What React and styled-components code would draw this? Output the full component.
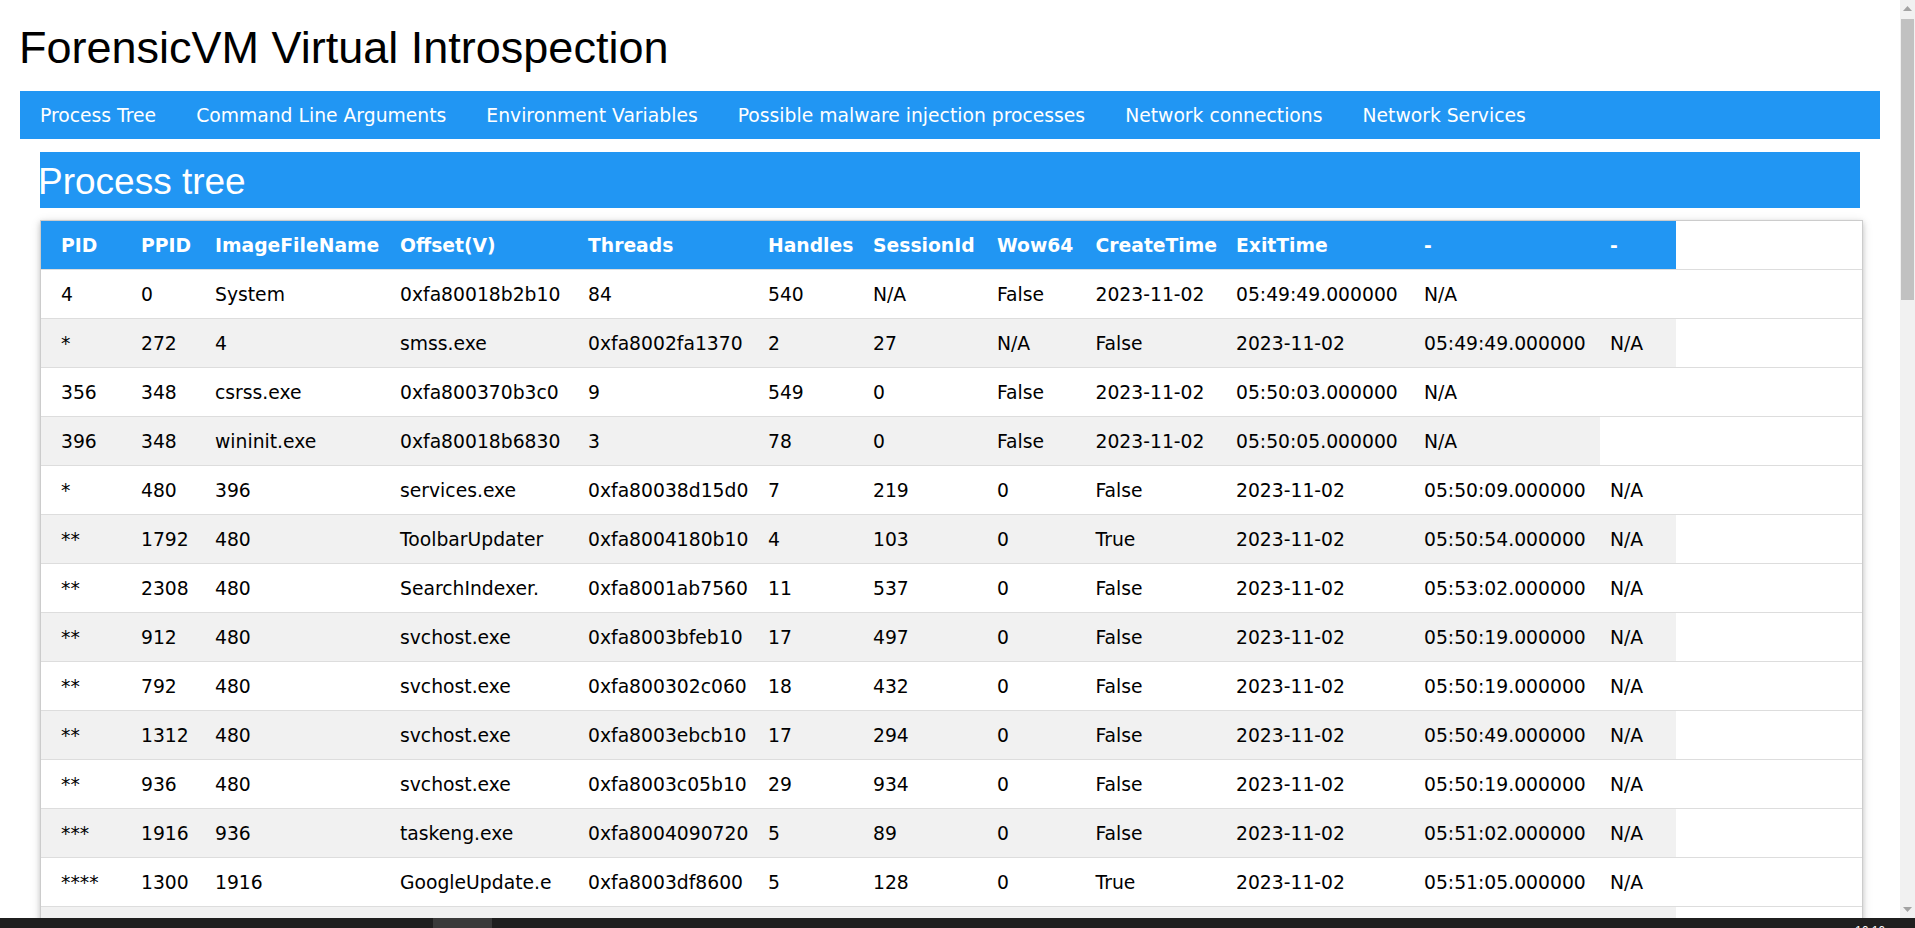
import React from "react";
import styled, { createGlobalStyle } from "styled-components";

const GlobalStyle = createGlobalStyle`
  html, body {
    margin: 0;
    padding: 0;
    overflow: hidden;
    background: #fff;
  }
  body {
    font-family: "DejaVu Sans", Verdana, sans-serif;
    font-size: 18.75px;
    line-height: 1.5;
    color: #000;
  }
`;

const Screen = styled.div`
  display: flex;
  flex-direction: column;
  width: 1915px;
  height: 928px;
`;

const Viewport = styled.div`
  display: flex;
  height: 918px;
  min-height: 0;
`;

const Page = styled.main`
  flex: 1;
  min-width: 0;
  overflow: hidden;
`;

const Title = styled.h1`
  margin: 21px 0 16px;
  padding: 0 19px;
  font-family: "Liberation Sans", Arial, sans-serif;
  font-size: 45px;
  font-weight: 400;
  line-height: 54px;
  color: #000;
`;

const NavBar = styled.nav`
  display: flex;
  margin: 0 20px;
  background: #2196f3;
`;

const NavItem = styled.a`
  padding: 11px 20px 9px;
  color: #fff;
  text-decoration: none;
  white-space: nowrap;
  line-height: 28px;
`;

const Section = styled.section`
  padding: 13px 40px 0;
`;

const Heading = styled.h2`
  margin: 0;
  padding: 3px 0 0;
  background: #2196f3;
  color: #fff;
  font-family: "Liberation Sans", Arial, sans-serif;
  font-size: 37px;
  font-weight: 400;
  line-height: 53px;
  text-indent: -2px;
`;

const TableCard = styled.div`
  margin: 12px -3px 0 0;
  border: 1px solid #ccc;
  box-shadow: 0 2px 5px 0 rgba(0, 0, 0, 0.16), 0 2px 10px 0 rgba(0, 0, 0, 0.12);
  background: #fff;
`;

const Table = styled.table`
  width: 100%;
  border-collapse: collapse;
  border-spacing: 0;
  table-layout: fixed;
`;

const Col = styled.col`
  width: ${(p) => (p.$w ? `${p.$w}px` : "auto")};
`;

const Row = styled.tr`
  border-bottom: 1px solid #ddd;
  background: ${(p) =>
    p.$head ? "#2196f3" : p.$even ? "#f1f1f1" : "#fff"};
`;

const cellBase = `
  height: 28px;
  padding: 11px 10px 9px;
  text-align: left;
  vertical-align: top;
  white-space: nowrap;
  overflow: hidden;
  line-height: 28px;
  &:first-child {
    padding-left: 20px;
  }
`;

const HeadCell = styled.th`
  ${cellBase}
  color: #fff;
  font-weight: 700;
`;

const Cell = styled.td`
  ${cellBase}
  font-weight: 400;
`;

const Scrollbar = styled.div`
  display: flex;
  flex-direction: column;
  width: 15px;
  background: #f1f1f1;
`;

const ScrollButton = styled.div`
  display: flex;
  align-items: center;
  justify-content: center;
  height: 17px;
  flex-shrink: 0;
`;

const Track = styled.div`
  flex: 1;
  padding: 2px 1px 0;
`;

const Thumb = styled.div`
  height: 281px;
  background: #c1c1c1;
`;

const Taskbar = styled.footer`
  display: flex;
  height: 10px;
  overflow: hidden;
  background: #1f1f1f;
`;

const TaskSlot = styled.div`
  width: 59px;
  margin-left: 433px;
  background: #3a3a3a;
`;

const Spacer = styled.div`
  flex: 1;
`;

const Clock = styled.div`
  margin-right: 30px;
  padding-top: 6px;
  font-family: "Liberation Sans", Arial, sans-serif;
  font-size: 12px;
  line-height: 14px;
  color: #fff;
`;

const navItems = [
  "Process Tree",
  "Command Line Arguments",
  "Environment Variables",
  "Possible malware injection processes",
  "Network connections",
  "Network Services",
];

const colWidths = [90, 74, 185, 188, 180, 105, 124, 98.5, 140.5, 188, 186, 76, null];

const headers = [
  "PID",
  "PPID",
  "ImageFileName",
  "Offset(V)",
  "Threads",
  "Handles",
  "SessionId",
  "Wow64",
  "CreateTime",
  "ExitTime",
  "-",
  "-",
];

const rows = [
  ["4", "0", "System", "0xfa80018b2b10", "84", "540", "N/A", "False", "2023-11-02", "05:49:49.000000", "N/A"],
  ["*", "272", "4", "smss.exe", "0xfa8002fa1370", "2", "27", "N/A", "False", "2023-11-02", "05:49:49.000000", "N/A"],
  ["356", "348", "csrss.exe", "0xfa800370b3c0", "9", "549", "0", "False", "2023-11-02", "05:50:03.000000", "N/A"],
  ["396", "348", "wininit.exe", "0xfa80018b6830", "3", "78", "0", "False", "2023-11-02", "05:50:05.000000", "N/A"],
  ["*", "480", "396", "services.exe", "0xfa80038d15d0", "7", "219", "0", "False", "2023-11-02", "05:50:09.000000", "N/A"],
  ["**", "1792", "480", "ToolbarUpdater", "0xfa8004180b10", "4", "103", "0", "True", "2023-11-02", "05:50:54.000000", "N/A"],
  ["**", "2308", "480", "SearchIndexer.", "0xfa8001ab7560", "11", "537", "0", "False", "2023-11-02", "05:53:02.000000", "N/A"],
  ["**", "912", "480", "svchost.exe", "0xfa8003bfeb10", "17", "497", "0", "False", "2023-11-02", "05:50:19.000000", "N/A"],
  ["**", "792", "480", "svchost.exe", "0xfa800302c060", "18", "432", "0", "False", "2023-11-02", "05:50:19.000000", "N/A"],
  ["**", "1312", "480", "svchost.exe", "0xfa8003ebcb10", "17", "294", "0", "False", "2023-11-02", "05:50:49.000000", "N/A"],
  ["**", "936", "480", "svchost.exe", "0xfa8003c05b10", "29", "934", "0", "False", "2023-11-02", "05:50:19.000000", "N/A"],
  ["***", "1916", "936", "taskeng.exe", "0xfa8004090720", "5", "89", "0", "False", "2023-11-02", "05:51:02.000000", "N/A"],
  ["****", "1300", "1916", "GoogleUpdate.e", "0xfa8003df8600", "5", "128", "0", "True", "2023-11-02", "05:51:05.000000", "N/A"],
  ["", "", "", "", "", "", "", "", "", "", "", ""],
];

const Arrow = ({ down }) => (
  <svg width="9" height="6" viewBox="0 0 9 6">
    <path d={down ? "M0 0 L9 0 L4.5 5 Z" : "M0 5 L9 5 L4.5 0 Z"} fill="#a3a3a3" />
  </svg>
);

export default function App() {
  return (
    <>
      <GlobalStyle />
      <Screen>
        <Viewport>
          <Page>
            <Title>ForensicVM Virtual Introspection</Title>
            <NavBar>
              {navItems.map((item) => (
                <NavItem key={item} href="#">
                  {item}
                </NavItem>
              ))}
            </NavBar>
            <Section>
              <Heading>Process tree</Heading>
              <TableCard>
                <Table>
                  <colgroup>
                    {colWidths.map((w, i) => (
                      <Col key={i} $w={w} />
                    ))}
                  </colgroup>
                  <tbody>
                    <Row $head>
                      {headers.map((h, i) => (
                        <HeadCell key={i}>{h}</HeadCell>
                      ))}
                    </Row>
                    {rows.map((r, ri) => (
                      <Row key={ri} $even={ri % 2 === 1}>
                        {r.map((c, ci) => (
                          <Cell key={ci}>{c}</Cell>
                        ))}
                      </Row>
                    ))}
                  </tbody>
                </Table>
              </TableCard>
            </Section>
          </Page>
          <Scrollbar>
            <ScrollButton>
              <Arrow />
            </ScrollButton>
            <Track>
              <Thumb />
            </Track>
            <ScrollButton>
              <Arrow down />
            </ScrollButton>
          </Scrollbar>
        </Viewport>
        <Taskbar>
          <TaskSlot />
          <Spacer />
          <Clock>16:16</Clock>
        </Taskbar>
      </Screen>
    </>
  );
}
